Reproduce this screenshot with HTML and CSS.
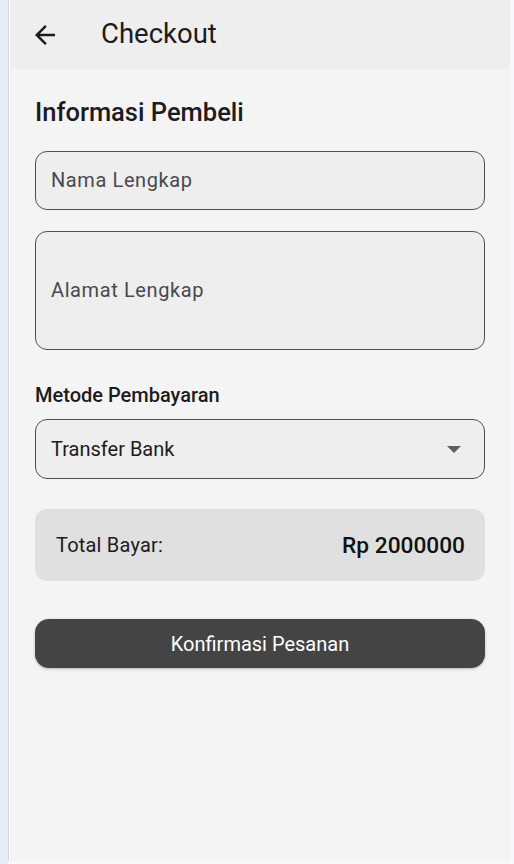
FILE: index.html
```html
<!DOCTYPE html>
<html lang="id">
<head>
<meta charset="utf-8">
<title>Checkout</title>
<link rel="stylesheet" href="styles.css">
</head>
<body>
<div class="screen">
  <div class="side"></div>
  <div class="frame">
    <div class="app">
      <header class="appbar">
        <svg class="back" width="30" height="30" viewBox="0 0 24 24"><path d="M20 11H7.83l5.59-5.59L12 4l-8 8 8 8 1.41-1.41L7.83 13H20v-2z" fill="#1d1b20"/></svg>
        <h1 class="title">Checkout</h1>
      </header>
      <main class="content">
        <h2 class="section-title">Informasi Pembeli</h2>
        <div class="field field-single"><span class="label">Nama Lengkap</span></div>
        <div class="field field-multi"><span class="label">Alamat Lengkap</span></div>
        <h3 class="sub-title">Metode Pembayaran</h3>
        <div class="field field-select">
          <span class="value">Transfer Bank</span>
          <svg class="caret" width="14" height="7" viewBox="0 0 14 7"><path d="M0 0h14L7 7z" fill="#5f5f5f"/></svg>
        </div>
        <div class="total">
          <span class="total-label">Total Bayar:</span>
          <span class="total-value">Rp 2000000</span>
        </div>
        <button class="confirm">Konfirmasi Pesanan</button>
      </main>
    </div>
  </div>
</div>
</body>
</html>
```
FILE: styles.css
```css
* { box-sizing: border-box; }
html, body { margin: 0; padding: 0; }
body {
  background: #f8f8fc;
  font-family: Roboto, "Noto Sans", sans-serif;
  width: 514px;
  height: 864px;
  overflow: hidden;
}
.screen {
  display: flex;
  height: 864px;
}
.side {
  width: 8px;
  background: #e7ecf6;
  flex: none;
}
.frame {
  width: 502px;
  height: 861px;
  border-left: 1px solid #d9d9db;
  padding-left: 1px;
  background: #ffffff;
  flex: none;
}
.app {
  height: 100%;
  background: #f4f4f4;
  display: flex;
  flex-direction: column;
}
.appbar {
  height: 69px;
  background: #eeeeee;
  display: flex;
  align-items: center;
  padding-left: 20px;
  flex: none;
}
.back { display: block; }
.title {
  margin: -2px 0 0 41px;
  font-size: 27.5px;
  font-weight: 400;
  color: #1d1b20;
  letter-spacing: 0;
}
.content {
  padding: 0 25px;
  display: flex;
  flex-direction: column;
}
.section-title {
  margin: 27px 0 0;
  height: 32px;
  line-height: 32px;
  font-size: 25.5px;
  font-weight: 500;
  color: #1d1b20;
}
.field {
  border: 1.3px solid #4f4d55;
  border-radius: 12px;
  background: #eeeeee;
  display: flex;
  align-items: center;
  padding: 0 15px;
}
.field-single {
  margin-top: 23px;
  height: 59px;
}
.field-multi {
  margin-top: 21px;
  height: 119px;
}
.label {
  font-size: 20px;
  color: #4a4850;
  letter-spacing: 0.6px;
  margin-top: -2px;
}
.sub-title {
  margin: 33px 0 0;
  height: 24px;
  line-height: 24px;
  font-size: 20px;
  font-weight: 500;
  color: #1d1b20;
}
.field-select {
  margin-top: 12px;
  height: 60px;
  justify-content: space-between;
  padding-right: 23px;
}
.value {
  font-size: 20px;
  color: #1d1b20;
  letter-spacing: 0;
}
.caret { display: block; }
.total {
  margin-top: 30px;
  height: 72px;
  background: #e0e0e0;
  border-radius: 12px;
  display: flex;
  align-items: center;
  justify-content: space-between;
  padding: 0 20px 0 21px;
}
.total-label {
  font-size: 20px;
  color: #1d1b20;
  letter-spacing: 0.2px;
}
.total-value {
  font-size: 22.7px;
  font-weight: 500;
  color: #111111;
}
.confirm {
  margin-top: 38px;
  height: 49px;
  border: none;
  border-radius: 14px;
  background: #444444;
  color: #ffffff;
  font-family: Roboto, "Noto Sans", sans-serif;
  font-size: 20px;
  font-weight: 400;
  box-shadow: 0 1px 3px rgba(0,0,0,0.25);
  padding: 0;
}
```
